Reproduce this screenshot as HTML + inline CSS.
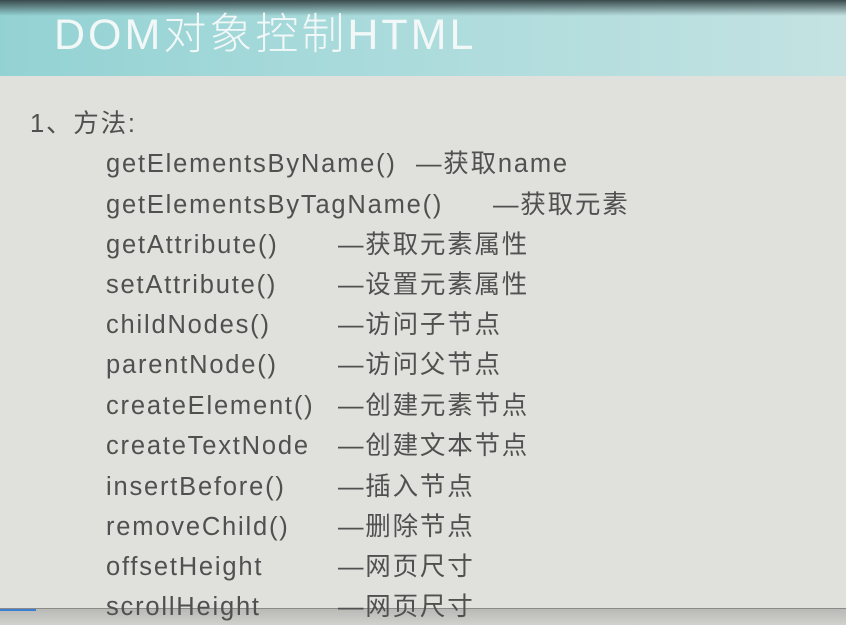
<!DOCTYPE html>
<html><head><meta charset="utf-8"><style>
body{margin:0;width:846px;height:624px;overflow:hidden;background:#e0e0dd;position:relative;font-family:"Liberation Sans","Noto Sans CJK SC",sans-serif;color:#505050}
.hdr{position:absolute;left:0;top:0;width:846px;height:76px;background:linear-gradient(90deg,#93d2d3 0%,#a8dadb 40%,#c4e2e2 100%)}
.hdr:before{content:"";position:absolute;left:0;top:0;right:0;height:16px;background:linear-gradient(#3a4a4c,rgba(80,120,122,0))}
.title{position:absolute;left:54px;top:0px;font-size:43px;color:#f2f7f7;font-weight:300;letter-spacing:3px}
.t{position:absolute;font-size:25.5px;line-height:30px;white-space:nowrap;letter-spacing:1.8px}
.bot{position:absolute;left:0;top:608px;width:846px;height:16px;background:linear-gradient(#b9b9b6,#d0d0cd);border-top:1px solid #8a8a88}
</style></head><body>
<div class="hdr"><div class="title">DOM对象控制HTML</div></div>
<div class="t" style="left:30px;top:109px">1、方法:</div>
<div class="t" style="left:106px;top:149px">getElementsByName()</div><div class="t" style="left:416px;top:149px">—获取name</div>
<div class="t" style="left:106px;top:190px">getElementsByTagName()</div><div class="t" style="left:493px;top:190px">—获取元素</div>
<div class="t" style="left:106px;top:230px">getAttribute()</div><div class="t" style="left:338px;top:230px">—获取元素属性</div>
<div class="t" style="left:106px;top:270px">setAttribute()</div><div class="t" style="left:338px;top:270px">—设置元素属性</div>
<div class="t" style="left:106px;top:310px">childNodes()</div><div class="t" style="left:338px;top:310px">—访问子节点</div>
<div class="t" style="left:106px;top:350px">parentNode()</div><div class="t" style="left:338px;top:350px">—访问父节点</div>
<div class="t" style="left:106px;top:391px">createElement()</div><div class="t" style="left:338px;top:391px">—创建元素节点</div>
<div class="t" style="left:106px;top:431px">createTextNode</div><div class="t" style="left:338px;top:431px">—创建文本节点</div>
<div class="t" style="left:106px;top:472px">insertBefore()</div><div class="t" style="left:338px;top:472px">—插入节点</div>
<div class="t" style="left:106px;top:512px">removeChild()</div><div class="t" style="left:338px;top:512px">—删除节点</div>
<div class="t" style="left:106px;top:552px">offsetHeight</div><div class="t" style="left:338px;top:552px">—网页尺寸</div>
<div class="bot"><div style="position:absolute;left:0;top:0;width:36px;height:2px;background:#3a7fd0"></div></div>
<div class="t" style="left:106px;top:592px">scrollHeight</div><div class="t" style="left:338px;top:592px">—网页尺寸</div>
</body></html>
